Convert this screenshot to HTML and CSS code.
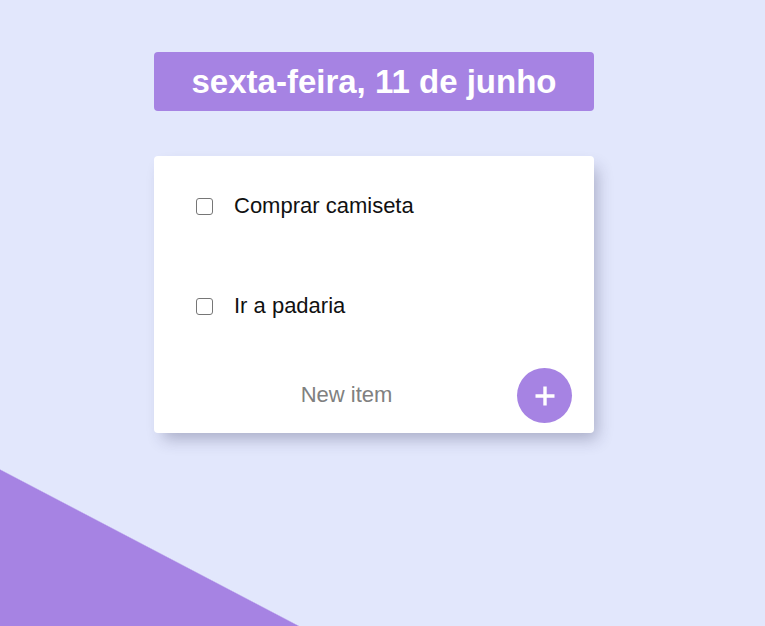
FILE: index.html
```
<!DOCTYPE html>
<html lang="pt">
<head>
<meta charset="utf-8">
<title>To-Do List</title>
<link rel="stylesheet" href="styles.css">
</head>
<body>
<main class="page">
  <header class="heading">
    <h1 class="heading-title">sexta-feira, 11 de junho</h1>
  </header>
  <section class="box">
    <div class="item">
      <input class="item-check" type="checkbox">
      <p class="item-text">Comprar camiseta</p>
    </div>
    <div class="item">
      <input class="item-check" type="checkbox">
      <p class="item-text">Ir a padaria</p>
    </div>
    <form class="new-form">
      <input class="new-input" type="text" name="newItem" placeholder="New item" autocomplete="off">
      <button class="add-btn" type="button" aria-label="Add">
        <svg class="add-icon" width="20" height="20" viewBox="0 0 20 20" aria-hidden="true">
          <path d="M10 0.5V19.5M0.5 10H19.5" stroke="#fff" stroke-width="3.4" fill="none"/>
        </svg>
      </button>
    </form>
  </section>
</main>
</body>
</html>
```
FILE: styles.css
```
html {
  height: 100%;
  background-color: #e2e7fc;
  background-image: linear-gradient(27.64deg, #a683e3 138px, #e2e7fc 139.3px);
  background-attachment: fixed;
}

body {
  margin: 0;
  font-family: "Liberation Sans", Arial, sans-serif;
}

.page {
  width: 440px;
  padding: 52px 0 60px 154px;
}

.heading {
  background-color: #a683e3;
  border-radius: 4px;
  height: 59px;
  display: flex;
  align-items: center;
  justify-content: center;
}

.heading-title {
  margin: 0;
  color: #fff;
  font-size: 33px;
  font-weight: 700;
  line-height: 1;
  padding-bottom: 1px;
}

.box {
  position: relative;
  margin-top: 45px;
  background: #fff;
  border-radius: 4px;
  box-shadow: 6px 9px 16px -3px rgba(40, 40, 80, 0.3);
}

.item {
  height: 100px;
  display: flex;
  align-items: center;
}

.item-check {
  appearance: none;
  -webkit-appearance: none;
  box-sizing: border-box;
  width: 17px;
  height: 17px;
  margin: 0 0 0 42px;
  border: 1.5px solid #767676;
  border-radius: 3px;
  background: #fff;
}

.item-text {
  margin: 0 0 0 21px;
  font-size: 22px;
  color: #111;
}

.new-form {
  height: 77px;
  display: flex;
  align-items: center;
  padding-left: 22px;
}

.new-input {
  width: 341px;
  height: 60px;
  padding: 0;
  border: none;
  outline: none;
  text-align: center;
  font-family: "Liberation Sans", Arial, sans-serif;
  font-size: 22px;
  background: transparent;
}

.new-input::placeholder {
  color: #808080;
  opacity: 1;
}

.add-btn {
  width: 55px;
  height: 55px;
  margin-top: 1px;
  border: none;
  border-radius: 50%;
  background-color: #a683e3;
  padding: 0;
  display: flex;
  align-items: center;
  justify-content: center;
}

.add-icon {
  display: block;
  margin: 1px 0 0 1px;
}
```
